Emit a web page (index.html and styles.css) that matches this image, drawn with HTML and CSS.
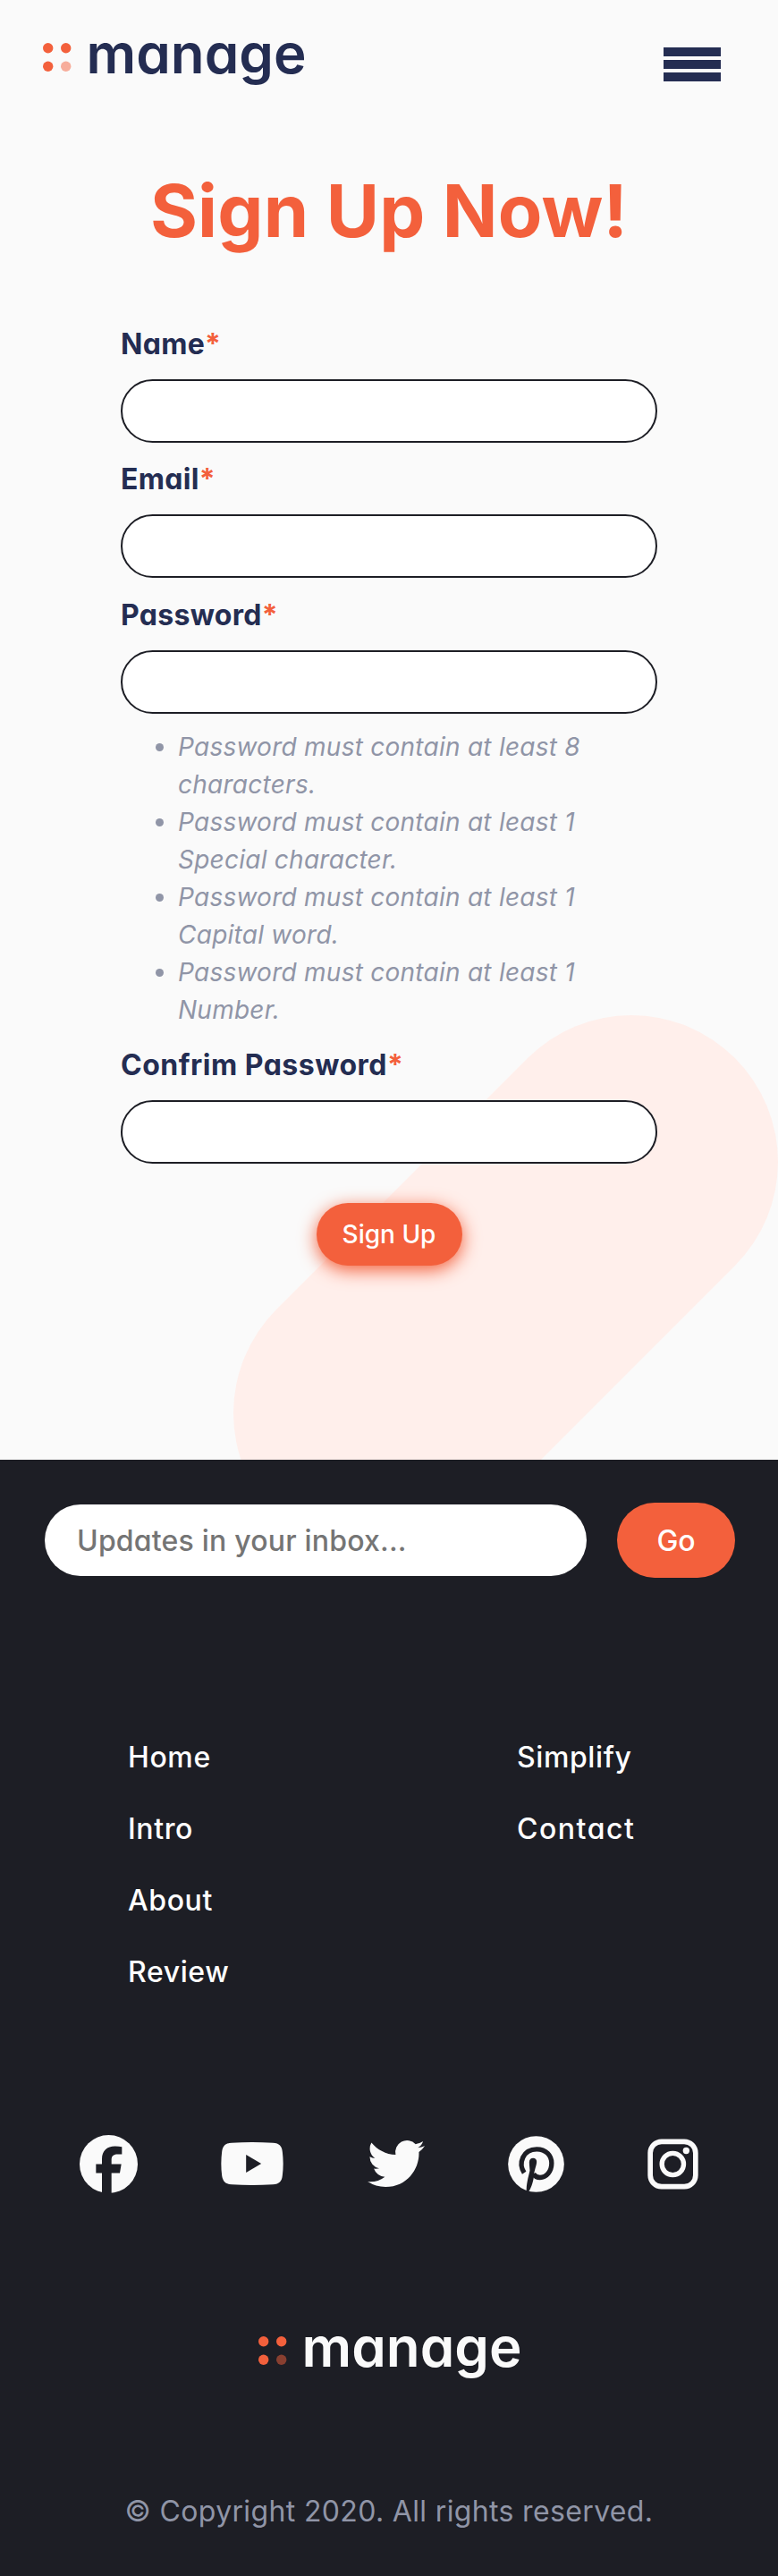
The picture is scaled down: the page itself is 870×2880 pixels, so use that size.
FILE: index.html
```html
<!DOCTYPE html>
<html lang="en">
<head>
<meta charset="utf-8">
<title>Manage - Sign Up</title>
<link rel="stylesheet" href="styles.css">
</head>
<body>
<main class="page">
  <svg class="pill" width="609" height="497" viewBox="0 0 609 497" aria-hidden="true"><path d="M445 164L164 445" stroke="#ffefeb" stroke-width="328" stroke-linecap="round"/></svg>
  <header class="header">
    <svg class="logo" width="294" height="60" viewBox="0 0 294 60" role="img" aria-label="manage">
      <g fill="#f3603c"><circle cx="5.7" cy="15.7" r="5.7"/><circle cx="25.7" cy="15.7" r="5.7"/><circle cx="5.7" cy="36.3" r="5.7"/><circle cx="25.7" cy="36.3" r="5.7" opacity=".5"/></g>
      <text class="logo-text" x="48.500" y="43.500" textLength="246" lengthAdjust="spacingAndGlyphs">manage</text>
    </svg>
    <button class="menu" aria-label="Menu"><span class="bar"></span><span class="bar"></span><span class="bar"></span></button>
  </header>
  <h1 class="title">Sign Up Now!</h1>
  <form class="form">
    <div class="group">
      <label class="label" for="name">Name<span class="star">*</span></label>
      <input class="field" id="name" type="text">
    </div>
    <div class="group">
      <label class="label" for="email">Email<span class="star">*</span></label>
      <input class="field" id="email" type="email">
    </div>
    <div class="group">
      <label class="label" for="password">Password<span class="star">*</span></label>
      <input class="field" id="password" type="password">
      <ul class="rules">
        <li>Password must contain at least 8 characters.</li>
        <li>Password must contain at least 1 Special character.</li>
        <li>Password must contain at least 1 Capital word.</li>
        <li>Password must contain at least 1 Number.</li>
      </ul>
    </div>
    <div class="group">
      <label class="label label-wide" for="confirm">Confrim Password<span class="star">*</span></label>
      <input class="field" id="confirm" type="password">
    </div>
    <button class="submit" type="button">Sign Up</button>
  </form>
</main>
<footer class="footer">
  <form class="newsletter">
    <input class="inbox" type="text" placeholder="Updates in your inbox...">
    <button class="go" type="button">Go</button>
  </form>
  <nav class="links">
    <div class="col"><a>Home</a><a>Intro</a><a>About</a><a>Review</a></div>
    <div class="col"><a>Simplify</a><a class="contact">Contact</a></div>
  </nav>
  <div class="social">
    <svg width="65" height="65" viewBox="88 79.5 195 195"><circle cx="185.5" cy="177" r="97.5" fill="#fafafa"/><path fill="#1d1e25" d="M163 280V207H143V177H163V160C163 132 180 117 207 117Q220 117 230 119V144H216C200 144 195 151 195 163V177H228L223 207H195V280Z"/></svg>
    <svg width="70" height="48" viewBox="563.5 105 210 144"><path fill="#fafafa" d="M600 107Q668 103 738 107C760 108 768 118 770 137Q775 177 770 217C768 236 760 246 738 247Q668 251 600 247C578 246 570 236 567 217Q562 177 567 137C570 118 578 108 600 107Z"/><path fill="#1d1e25" d="M648 147L699 177L648 207Z"/></svg>
    <svg width="64" height="64" viewBox="0 0 24 24"><path fill="#fafafa" d="M23.953 4.57a10 10 0 01-2.825.775 4.958 4.958 0 002.163-2.723c-.951.555-2.005.959-3.127 1.184a4.92 4.92 0 00-8.384 4.482C7.69 8.095 4.067 6.13 1.64 3.162a4.822 4.822 0 00-.666 2.475c0 1.71.87 3.213 2.188 4.096a4.904 4.904 0 01-2.228-.616v.06a4.923 4.923 0 003.946 4.827 4.996 4.996 0 01-2.212.085 4.936 4.936 0 004.604 3.417 9.867 9.867 0 01-6.102 2.105c-.39 0-.779-.023-1.17-.067a13.995 13.995 0 007.557 2.209c9.053 0 13.998-7.496 13.998-13.985 0-.21 0-.42-.015-.63A9.935 9.935 0 0024 4.59z"/></svg>
    <svg width="63" height="63" viewBox="24.500 36.500 189 189"><circle cx="119" cy="131" r="94" fill="#fafafa"/><path fill="none" stroke="#1d1e25" stroke-width="16" d="M79 160C58 128 75 81 121 81C152 81 171 102 171 128C171 156 153 176 132 176C122 176 115 172 110 164"/><path fill="#1d1e25" d="M96 124C96 107 121 106 121 123C121 134 113 152 112 166C111 184 104 207 95 222L87 225C85 200 93 175 98 153C98 148 96 135 96 124Z"/></svg>
    <svg width="57" height="57" viewBox="972 91.500 171 171"><g fill="none" stroke="#fafafa"><rect x="981.500" y="101.500" width="152" height="151" rx="38" stroke-width="17"/><circle cx="1057" cy="177" r="36.500" stroke-width="16"/></g><circle cx="1102" cy="132" r="11" fill="#fafafa"/></svg>
  </div>
  <svg class="logo logo-light" width="294" height="60" viewBox="0 0 294 60" role="img" aria-label="manage">
    <g fill="#f3603c"><circle cx="5.7" cy="15.7" r="5.7"/><circle cx="25.7" cy="15.7" r="5.7"/><circle cx="5.7" cy="36.3" r="5.7"/><circle cx="25.7" cy="36.3" r="5.7" opacity=".5"/></g>
    <text class="logo-text" x="48.500" y="43.500" textLength="246" lengthAdjust="spacingAndGlyphs">manage</text>
  </svg>
  <p class="copy">© Copyright 2020. All rights reserved.</p>
</footer>
</body>
</html>
```
FILE: styles.css
```css
* { box-sizing: border-box; }
body { margin: 0; font-family: Inter, sans-serif; font-feature-settings: "cv11"; background: #fafafa; color: #242d52; }
button, input { font-family: inherit; font-feature-settings: inherit; border: 0; margin: 0; }

.page { position: relative; height: 1632px; overflow: hidden; }
.pill { position: absolute; right: 0; bottom: 0; z-index: -1; fill: none; }

.header { display: flex; justify-content: space-between; align-items: flex-start; height: 98px; padding: 38px 64px 0 48px; }
.logo { display: block; overflow: visible; }
.logo-text { font-size: 61px; font-weight: 600; fill: #242d52; }
.menu { display: flex; flex-direction: column; gap: 4px; width: 64px; margin-top: 15px; padding: 0; background: none; }
.bar { height: 10px; background: #242d52; }

.title { margin: 88px 0 0; height: 175px; line-height: 100px; font-size: 81px; font-weight: 750; letter-spacing: .2px; text-align: center; color: #f3603c; }

.form { display: flex; flex-direction: column; gap: 16.3px; width: 600px; margin: 0 auto; }
.group { display: flex; flex-direction: column; gap: 15px; }
.label { font-size: 32px; line-height: 48px; font-weight: 750; letter-spacing: .3px; }
.label-wide { letter-spacing: .5px; }
.star { color: #f3603c; }
.field { width: 100%; height: 71px; padding: 0 32px; border: 2px solid #1d1e25; border-radius: 36px; background: #fff; font-size: 28px; }
.group + .group { margin-top: 1px; }
.rules { margin: 1px 0 0; padding: 0 64px; font-size: 28px; line-height: 42px; font-style: italic; letter-spacing: .25px; color: #9095a7; }
.submit { align-self: center; width: 163px; height: 70px; margin-top: 28px; padding: 0; border-radius: 35px; background: #f3603c; color: #fff; font-size: 28px; font-weight: 500; box-shadow: 0 5px 20px #f3603c; }

.footer { height: 1248px; padding-top: 48px; background: #1d1e25; }
.newsletter { display: flex; justify-content: space-between; align-items: center; padding: 0 48px 0 50px; }
.inbox { width: 606px; height: 80px; padding: 0 36px; border-radius: 40px; background: #fff; font-size: 32px; font-weight: 500; letter-spacing: .2px; }
.inbox::placeholder { color: #757575; }
.go { width: 132px; height: 84px; padding: 0; border-radius: 42px; background: #f3603c; color: #fff; font-size: 32px; font-weight: 500; }

.links { display: grid; grid-template-columns: 435px 1fr; padding: 177px 0 0 143px; color: #fff; font-size: 32px; font-weight: 500; letter-spacing: .6px; }
.col { display: flex; flex-direction: column; gap: 32px; line-height: 48px; }
.contact { letter-spacing: 1.5px; }

.social { display: flex; justify-content: space-between; align-items: center; height: 66px; margin-top: 145px; padding: 0 89px; }
.col:first-child { padding-bottom: 12px; }
.logo-light { margin: 150px 0 0 289px; }
.logo-light .logo-text { fill: #fafafa; }
.copy { margin: 122px 0 0; line-height: 48px; font-size: 32px; letter-spacing: .35px; text-align: center; color: #9095a7; }
```
